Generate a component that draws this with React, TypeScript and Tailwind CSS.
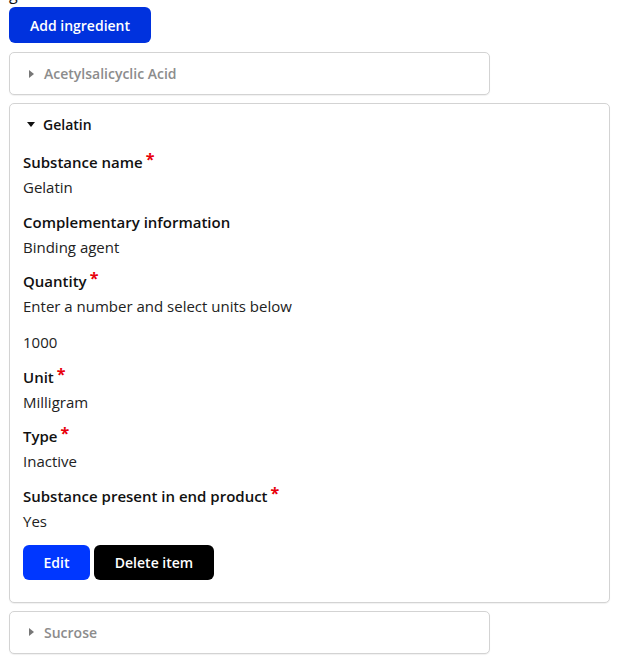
const font = { fontFamily: '"Open Sans", "Liberation Sans", sans-serif' };

const Caret = ({ open }: { open?: boolean }) =>
  open ? (
    <svg width="8" height="5" viewBox="0 0 8 5" className="shrink-0">
      <path d="M0 0h8L4 5z" fill="#111" />
    </svg>
  ) : (
    <svg width="5" height="8" viewBox="0 0 5 8" className="shrink-0">
      <path d="M0 0l5 4-5 4z" fill="#777" />
    </svg>
  );

const Collapsed = ({ title }: { title: string }) => (
  <div className="flex h-[43px] w-[481px] items-center rounded-[5px] border border-[#d3d3d3] bg-white pl-[19px] shadow-[0_1px_1px_rgba(0,0,0,0.06)]">
    <Caret />
    <span className="ml-[10px] text-[14px] font-semibold text-[#8c8c8c]">{title}</span>
  </div>
);

const Field = ({
  label,
  value,
  required = true,
  hint,
}: {
  label: string;
  value: string;
  required?: boolean;
  hint?: string;
}) => (
  <div className="flex flex-col">
    <div className="flex items-start leading-[20px]">
      <span className="text-[15px] font-semibold text-[#111]">{label}</span>
      {required && <span className="ml-[3px] -mt-[3px] text-[16px] font-bold text-[#e8000b]">*</span>}
    </div>
    {hint && <p className="mt-[5px] text-[15px] leading-[20px] text-[#222]">{hint}</p>}
    <p className={`${hint ? 'mt-[16px]' : 'mt-[5px]'} text-[15px] leading-[20px] text-[#222]`}>{value}</p>
  </div>
);

export default function App() {
  return (
    <div style={font} className="min-h-[664px] w-[629px] overflow-hidden bg-white pl-[9px]">
      <div className="-mt-[16px] h-[19px] text-[16px] leading-[20px] text-[#111]">g</div>
      <button className="mt-[4px] h-[36px] w-[142px] rounded-[6px] bg-[#0032de] text-[14px] font-semibold text-white">
        Add ingredient
      </button>
      <div className="mt-[9px] flex flex-col gap-[8px]">
        <Collapsed title="Acetylsalicyclic Acid" />
        <div className="w-[601px] rounded-[5px] border border-[#d3d3d3] bg-white px-[13px] pb-[22px] pt-[10px] shadow-[0_1px_1px_rgba(0,0,0,0.06)]">
          <div className="flex h-[20px] items-center pl-[4px]">
            <Caret open />
            <span className="ml-[8px] text-[14px] font-semibold text-[#111]">Gelatin</span>
          </div>
          <div className="mt-[18px] flex flex-col gap-[14.5px]">
            <Field label="Substance name" value="Gelatin" />
            <Field label="Complementary information" value="Binding agent" required={false} />
            <Field label="Quantity" hint="Enter a number and select units below" value="1000" />
            <Field label="Unit" value="Milligram" />
            <Field label="Type" value="Inactive" />
            <Field label="Substance present in end product" value="Yes" />
          </div>
          <div className="mt-[14px] flex gap-[4px]">
            <button className="h-[35px] w-[67px] rounded-[6px] bg-[#0037ff] text-[14px] font-semibold text-white">
              Edit
            </button>
            <button className="h-[35px] w-[120px] rounded-[6px] bg-black text-[14px] font-semibold text-white">
              Delete item
            </button>
          </div>
        </div>
        <Collapsed title="Sucrose" />
      </div>
    </div>
  );
}
